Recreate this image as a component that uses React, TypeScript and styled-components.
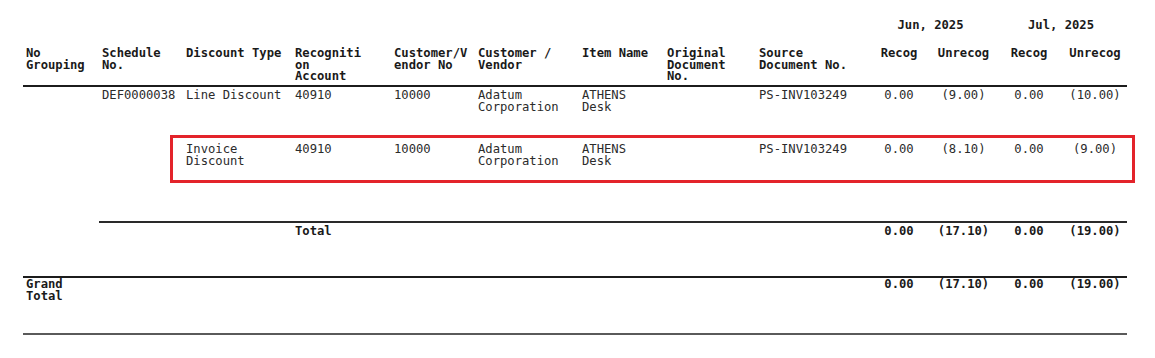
import React from 'react';
import styled, { createGlobalStyle } from 'styled-components';

const GlobalStyle = createGlobalStyle`
    html, body {
        margin: 0;
        padding: 0;
        background: #ffffff;
    }
    body {
        font-family: "DejaVu Sans Mono", "Liberation Mono", monospace;
        font-size: 12.2px;
        line-height: 11.5px;
        color: #262626;
    }
`;

const COLS = '76px 84px 109px 99px 84px 104px 85px 92px 110px 66px 63px 68px 64px';

const Report = styled.div`
    padding: 20px 0 0 23px;
    width: 1104px;
`;

const Row = styled.div<{ $height: number; $rule?: 'thick' | 'grey' | 'none'; $ruleFrom?: number; $padTop?: number }>`
    position: relative;
    display: grid;
    grid-template-columns: ${COLS};
    height: ${(p) => p.$height}px;
    padding-top: ${(p) => p.$padTop ?? 0}px;
    box-sizing: border-box;
`;

const Rule = styled.div<{ $from?: number; $colour?: string }>`
    display: grid;
    grid-template-columns: ${COLS};
    height: 2px;

    &::before {
        content: '';
        grid-column: ${(p) => p.$from ?? 1} / -1;
        background: ${(p) => p.$colour ?? '#1c1c1c'};
    }
`;

const Cell = styled.div<{ $num?: boolean; $bold?: boolean; $span?: number }>`
    padding: 0 3px;
    white-space: pre;
    text-align: ${(p) => (p.$num ? 'center' : 'left')};
    font-weight: ${(p) => (p.$bold ? 700 : 400)};
    grid-column: ${(p) => (p.$span ? `span ${p.$span}` : 'auto')};
    color: ${(p) => (p.$bold ? '#1a1a1a' : '#2b2b2b')};
`;

const Highlight = styled.div`
    position: absolute;
    left: 147px;
    top: -6px;
    width: 965px;
    height: 48px;
    border: 3px solid #e3232a;
    box-sizing: border-box;
    pointer-events: none;
`;

const headers = [
    'No\nGrouping',
    'Schedule\nNo.',
    'Discount Type',
    'Recogniti\non\nAccount',
    'Customer/V\nendor No',
    'Customer /\nVendor',
    'Item Name',
    'Original\nDocument\nNo.',
    'Source\nDocument No.',
];

const lines = [
    {
        grouping: '',
        schedule: 'DEF0000038',
        type: 'Line Discount',
        account: '40910',
        vendorNo: '10000',
        vendor: 'Adatum\nCorporation',
        item: 'ATHENS\nDesk',
        original: '',
        source: 'PS-INV103249',
        values: ['0.00', '(9.00)', '0.00', '(10.00)'],
        marked: false,
    },
    {
        grouping: '',
        schedule: '',
        type: 'Invoice\nDiscount',
        account: '40910',
        vendorNo: '10000',
        vendor: 'Adatum\nCorporation',
        item: 'ATHENS\nDesk',
        original: '',
        source: 'PS-INV103249',
        values: ['0.00', '(8.10)', '0.00', '(9.00)'],
        marked: true,
    },
];

const totals = ['0.00', '(17.10)', '0.00', '(19.00)'];

const App = () => {
    return (
        <>
            <GlobalStyle />
            <Report>
                <Row $height={28}>
                    <Cell $span={9} />
                    <Cell $num $bold $span={2}>Jun, 2025</Cell>
                    <Cell $num $bold $span={2}>Jul, 2025</Cell>
                </Row>
                <Row $height={37}>
                    {headers.map((h) => (
                        <Cell key={h} $bold>{h}</Cell>
                    ))}
                    {['Recog', 'Unrecog', 'Recog', 'Unrecog'].map((h, i) => (
                        <Cell key={i} $num $bold>{h}</Cell>
                    ))}
                </Row>
                <Rule />
                {lines.map((l, i) => (
                    <Row key={i} $height={54} $padTop={3}>
                        <Cell>{l.grouping}</Cell>
                        <Cell>{l.schedule}</Cell>
                        <Cell>{l.type}</Cell>
                        <Cell>{l.account}</Cell>
                        <Cell>{l.vendorNo}</Cell>
                        <Cell>{l.vendor}</Cell>
                        <Cell>{l.item}</Cell>
                        <Cell>{l.original}</Cell>
                        <Cell>{l.source}</Cell>
                        {l.values.map((v, j) => (
                            <Cell key={j} $num>{v}</Cell>
                        ))}
                        {l.marked && <Highlight />}
                    </Row>
                ))}
                <Row $height={26} />
                <Rule $from={2} $colour="#2a2a2a" />
                <Row $height={53} $padTop={3}>
                    <Cell $span={3} />
                    <Cell $bold $span={6}>Total</Cell>
                    {totals.map((v, j) => (
                        <Cell key={j} $num $bold>{v}</Cell>
                    ))}
                </Row>
                <Rule />
                <Row $height={55} $padTop={1}>
                    <Cell $bold $span={9}>{'Grand\nTotal'}</Cell>
                    {totals.map((v, j) => (
                        <Cell key={j} $num $bold>{v}</Cell>
                    ))}
                </Row>
                <Rule $colour="#5a5a5a" />
            </Report>
        </>
    );
};

export default App;
